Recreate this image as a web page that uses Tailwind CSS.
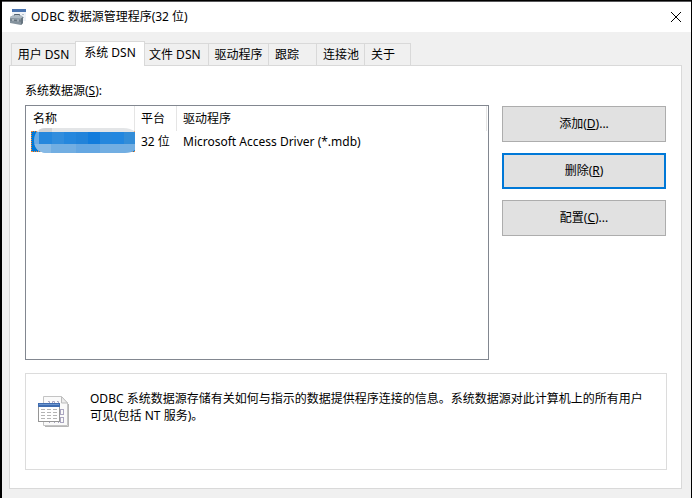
<!DOCTYPE html>
<html lang="zh-CN">
<head>
    <meta charset="UTF-8">
    <meta name="viewport" content="width=device-width, initial-scale=1.0">
    <title>ODBC 数据源管理程序(32 位)</title>
    <script src="https://cdn.jsdelivr.net/npm/@tailwindcss/browser@4"></script>
</head>
<body class="min-h-screen flex flex-col bg-[#f0f0f0] border-l-2 border-r border-t border-black text-xs text-black font-['Noto_Sans','Noto_Sans_CJK_SC',sans-serif]">
    <!-- Title bar -->
    <header class="h-[31px] flex items-center gap-[5px] pl-2 pr-2 bg-white border-t border-[#57575a]">
        <svg class="w-4 h-4 shrink-0" viewBox="0 0 16 16" aria-hidden="true">
            <rect x="2" y="0" width="14" height="12" fill="#eef2f7"/>
            <rect x="2" y="0" width="14" height="3" fill="#4a74b0"/>
            <path d="M4 5.500h2M8 5.500h2M12 5.500h2M12 8.500h2" stroke="#b4bfcb"/>
            <path d="M4.500 7V5.500h5V7" fill="none" stroke="#55636f"/>
            <path d="M0 8l3-1.500h8l2 1.500v6l-2 2L0 14z" fill="#84929d"/>
            <path d="M0 8l3-1.500h8l2 1.500-2 1.500L0 9z" fill="#aebac3"/>
            <path d="M0 11l11 1 2-1" fill="none" stroke="#66747f"/>
            <path d="M3 10v2M8 10.500v2" stroke="#d9e0e5"/>
            <path d="M11 9.500V16l2-2V8z" fill="#66747f"/>
        </svg>
        <h1 class="flex-1">ODBC 数据源管理程序(32 位)</h1>
        <button type="button" aria-label="关闭" class="p-px">
            <svg class="w-3 h-3" viewBox="0 0 12 12" aria-hidden="true">
                <path d="M1 1l10 10M11 1L1 11" stroke="#000" fill="none"/>
            </svg>
        </button>
    </header>

    <main class="flex-1 flex flex-col pt-[9px] pl-[7px] pr-[9px] pb-[9px]">
        <!-- Tabs -->
        <div role="tablist" class="flex items-end px-0.5 -mb-px z-10">
            <button type="button" role="tab" class="h-[23px] w-16 border border-r-0 border-[#d9d9d9] whitespace-nowrap">用户 DSN</button>
            <button type="button" role="tab" aria-selected="true" class="h-[25px] w-[70px] pb-0.5 bg-white border border-b-0 border-[#d9d9d9] whitespace-nowrap">系统 DSN</button>
            <button type="button" role="tab" class="h-[23px] w-16 pl-1 text-left border border-l-0 border-[#d9d9d9] whitespace-nowrap">文件 DSN</button>
            <button type="button" role="tab" class="h-[23px] w-[60px] border border-l-0 border-[#d9d9d9]">驱动程序</button>
            <button type="button" role="tab" class="h-[23px] w-12 pl-1.5 text-left border border-l-0 border-[#d9d9d9]">跟踪</button>
            <button type="button" role="tab" class="h-[23px] w-12 pl-1.5 text-left border border-l-0 border-[#d9d9d9]">连接池</button>
            <button type="button" role="tab" class="h-[23px] w-[46px] pl-1.5 text-left border border-l-0 border-[#d9d9d9]">关于</button>
        </div>

        <section role="tabpanel" class="flex-1 flex flex-col bg-white border border-[#d9d9d9] pt-[17px] pl-[15px] pr-[14px] pb-[18px]">
            <h2 id="sources" class="h-4 leading-4 mb-1.5">系统数据源(<u>S</u>):</h2>

            <div class="flex-1 flex gap-[13px]">
                <!-- Data source list -->
                <div class="flex-1 border border-[#828790] pl-[5px] pr-px">
                    <table aria-labelledby="sources" class="w-full table-fixed text-left border-separate border-spacing-0">
                        <colgroup>
                            <col class="w-[104px]">
                            <col class="w-[42px]">
                            <col>
                        </colgroup>
                        <thead>
                            <tr class="h-[25px]">
                                <th class="p-0 pl-0.5 font-normal border-r border-[#e5e5e5]">名称</th>
                                <th class="p-0 pl-1.5 font-normal border-r border-[#e5e5e5]">平台</th>
                                <th class="p-0 pl-1.5 font-normal border-r border-[#e5e5e5]">驱动程序</th>
                            </tr>
                        </thead>
                        <tbody>
                            <tr class="h-[21px]">
                                <td class="relative p-0 bg-[#0078d7] border border-dotted border-[#ff8728]">
                                    <!-- Masked name -->
                                    <svg class="absolute -top-1 left-0 w-[103px] h-[25px]" viewBox="0 0 103 25" aria-hidden="true">
                                        <defs>
                                            <clipPath id="pill"><path d="M103 4v18q-4 3-10 3H14Q2 24 2 12 3 0 14 0h77q8 0 12 4z"/></clipPath>
                                        </defs>
                                        <g clip-path="url(#pill)">
                                            <rect width="103" height="4" fill="#e3e5e7"/>
                                            <rect x="7" width="13" height="4" fill="#d0d2d4"/>
                                            <rect y="4" width="103" height="12" fill="#2587dd"/>
                                            <rect y="4" width="7" height="12" fill="#67aae5"/>
                                            <rect x="20" y="4" width="12" height="12" fill="#318ddd"/>
                                            <rect x="44" y="4" width="12" height="12" fill="#2183da"/>
                                            <rect x="56" y="4" width="12" height="12" fill="#127cdc"/>
                                            <rect x="80" y="4" width="12" height="12" fill="#2387df"/>
                                            <rect x="92" y="4" width="11" height="12" fill="#338dd8"/>
                                            <rect y="16" width="103" height="9" fill="#72aee2"/>
                                            <rect y="16" width="19" height="9" fill="#86b9e5"/>
                                            <rect x="44" y="16" width="24" height="9" fill="#65a7e2"/>
                                        </g>
                                    </svg>
                                </td>
                                <td class="p-0 pl-1.5 whitespace-nowrap">32 位</td>
                                <td class="p-0 pl-1.5 whitespace-nowrap">Microsoft Access Driver (*.mdb)</td>
                            </tr>
                        </tbody>
                    </table>
                </div>

                <div class="w-[165px] flex flex-col gap-[11px] pt-px pr-px">
                    <button type="button" class="h-9 bg-[#e1e1e1] border border-[#adadad]">添加(<u>D</u>)...</button>
                    <button type="button" class="h-9 bg-[#e1e1e1] border-2 border-[#0078d7]">删除(<u>R</u>)</button>
                    <button type="button" class="h-9 bg-[#e1e1e1] border border-[#adadad]">配置(<u>C</u>)...</button>
                </div>
            </div>

            <!-- Description -->
            <div class="h-[97px] mt-[13px] flex items-start gap-5 border border-[#dcdcdc] pl-3 pr-5 pt-4">
                <svg class="w-8 h-8 mt-[5px] shrink-0" viewBox="0 0 32 32" aria-hidden="true">
                    <path d="M5.500 1.500H23l6.500 6.500v22.500h-24z" fill="#fafafa" stroke="#c4c4c4"/>
                    <path d="M30.500 9v22.500H7" fill="none" stroke="#b5b5b5"/>
                    <path d="M23.500 1.500V8h6z" fill="#ececec" stroke="#bcbcbc"/>
                    <g fill="none" stroke="#aaa6c0">
                        <path d="M10 6.500h1.500V9M19 6.500h1.500V9M14.500 9V6.500h2V9"/>
                        <rect x="22.500" y="14.500" width="3" height="5"/>
                        <path d="M11.500 26v2M16.500 26v2M20.500 26v2"/>
                        <rect x="22.500" y="22.500" width="3" height="5"/>
                    </g>
                    <rect x=".5" y="8.500" width="21" height="18" fill="#fff" stroke="#969696"/>
                    <rect x="0" y="8" width="22" height="4" fill="#3f6cb0"/>
                    <path d="M1 9.500h20" stroke="#6d95cd"/>
                    <path d="M3 14.500h16M3 17.500h16M3 20.500h16M3 23.500h16" stroke="#b4b4b4" stroke-dasharray="4 2"/>
                </svg>
                <p class="flex-1 leading-[17px]">ODBC 系统数据源存储有关如何与指示的数据提供程序连接的信息。系统数据源对此计算机上的所有用户可见(包括 NT 服务)。</p>
            </div>
        </section>
    </main>
</body>
</html>
